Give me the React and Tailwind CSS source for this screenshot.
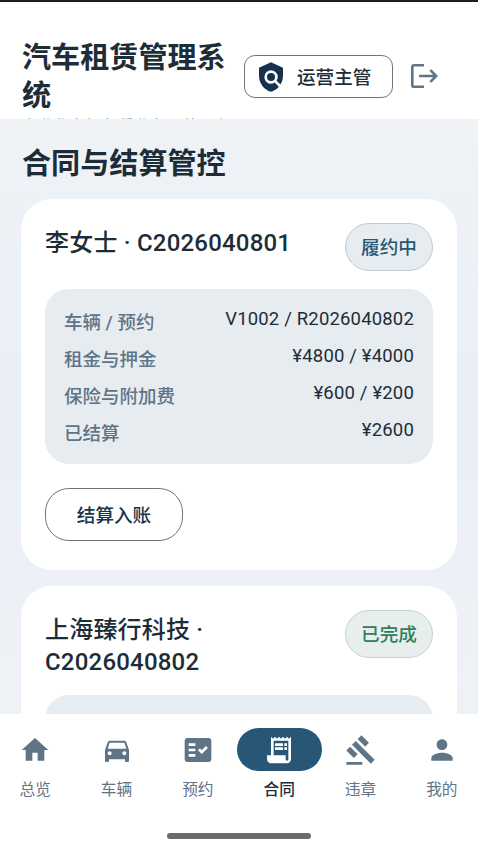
import React from 'react';
import {
  MdHome,
  MdDirectionsCar,
  MdFactCheck,
  MdReceiptLong,
  MdGavel,
  MdPerson,
  MdPolicy,
} from 'react-icons/md';

const NAV = [
  { label: '总览', Icon: MdHome },
  { label: '车辆', Icon: MdDirectionsCar },
  { label: '预约', Icon: MdFactCheck },
  { label: '合同', Icon: MdReceiptLong, active: true },
  { label: '违章', Icon: MdGavel },
  { label: '我的', Icon: MdPerson },
];

const ROWS = [
  ['车辆 / 预约', 'V1002 / R2026040802'],
  ['租金与押金', '¥4800 / ¥4000'],
  ['保险与附加费', '¥600 / ¥200'],
  ['已结算', '¥2600'],
];

function LogoutIcon() {
  return (
    <svg width="28" height="26" viewBox="0 0 28 26" fill="none" stroke="#607487" strokeWidth="2.6">
      <path d="M14 2.2H4.2Q2.3 2.2 2.3 4.1v17.8q0 1.9 1.9 1.9H14" />
      <path d="M9 13h17M20.4 7.2l5.8 5.8-5.8 5.8" />
    </svg>
  );
}

function Header() {
  return (
    <header className="flex h-[119px] shrink-0 items-start overflow-hidden border-t-2 border-[#1f1d20] bg-white pl-[22px]">
      <div className="w-[222px] shrink-0 pt-[38px]">
        <h1 className="w-[206px] text-[29.1px] leading-[37.5px] font-semibold">汽车租赁管理系统</h1>
        <p className="mt-[1px] text-[16px] leading-[22px] whitespace-nowrap text-[#607487]">专业化车辆租赁业务运营平台</p>
      </div>
      <button className="mt-[53px] flex h-[43px] w-[149px] items-center rounded-[11px] border-[1.3px] border-[#737578] pl-[10px]">
        <MdPolicy className="size-[32px] text-[#17324d]" />
        <span className="ml-[10px] pt-[2px] text-[18.6px] leading-[26px] font-medium whitespace-nowrap">运营主管</span>
      </button>
      <div className="mt-[61px] ml-[17px]">
        <LogoutIcon />
      </div>
    </header>
  );
}

function Card({ title, status, statusClass, children }) {
  return (
    <section className="rounded-[31px] bg-white px-6 pt-6">
      <div className="flex items-start justify-between">
        <h3 className="pt-[4px] text-[24px] leading-[32px] font-medium tracking-[0.2px] whitespace-pre-line">{title}</h3>
        <span className={`flex h-[48px] w-[88px] shrink-0 items-center justify-center rounded-full border pt-[1px] text-[18.6px] leading-[26px] font-medium ${statusClass}`}>
          {status}
        </span>
      </div>
      {children}
    </section>
  );
}

function Details({ className }) {
  return (
    <dl className={`flex h-[175px] flex-col rounded-[24px] bg-[#e7ecf0] px-[19px] pt-[17px] ${className}`}>
      {ROWS.map(([label, value]) => (
        <div key={label} className="flex h-[37px] items-start justify-between text-[18.5px] leading-[26px]">
          <dt className="pt-[4px] font-medium text-[#607487]">{label}</dt>
          <dd className="tracking-[0.17px]">{value}</dd>
        </div>
      ))}
    </dl>
  );
}

function BottomNav() {
  return (
    <nav className="flex h-[136px] shrink-0 flex-col items-center overflow-hidden bg-white">
      <div className="grid w-[488px] grid-cols-6 pt-[14px]">
        {NAV.map(({ label, Icon, active }) => (
          <div key={label} className="flex flex-col items-center">
            <span className={`flex h-[43px] w-[85px] items-center justify-center rounded-full ${active ? 'bg-[#285675] text-white' : 'text-[#607487]'}`}>
              <Icon className="mr-[1px] size-[32px]" />
            </span>
            <span className={`mt-[8px] mr-[1px] text-[15.7px] leading-[22px] ${active ? 'font-medium text-[#1d2d3a]' : 'text-[#607487]'}`}>{label}</span>
          </div>
        ))}
      </div>
      <div className="mt-[32px] h-[6px] w-[144px] rounded-full bg-[#6b6b6b]" />
    </nav>
  );
}

export default function App() {
  return (
    <div className="flex h-[850px] w-[478px] flex-col overflow-hidden bg-white font-[Roboto,'Noto_Sans_CJK_SC',sans-serif] text-[#1d2d38]">
      <Header />
      <main className="min-h-0 flex-1 overflow-hidden bg-linear-to-b from-[#eff3f6] via-[#eaeff8] to-[#eff2f5] px-[21px]">
        <h2 className="mt-[25px] ml-[1px] text-[29.1px] leading-[40px] font-semibold">合同与结算管控</h2>
        <div className="mt-[15px] flex flex-col gap-4">
          <Card title="李女士 · C2026040801" status="履约中" statusClass="border-[#c0ccd4] bg-[#e6ecef] text-[#285675]">
            <Details className="mt-[18px]" />
            <button className="mt-[24px] mb-[29px] flex h-[53px] w-[138px] items-center justify-center rounded-[24px] border-[1.3px] border-[#737578] pt-[5px] text-[18.6px] font-medium text-[#17324d]">
              结算入账
            </button>
          </Card>
          <Card title={'上海臻行科技 ·\nC2026040802'} status="已完成" statusClass="border-[#bfd8cf] bg-[#e7eeec] text-[#2c805c]">
            <Details className="mt-[17px]" />
          </Card>
        </div>
      </main>
      <BottomNav />
    </div>
  );
}
